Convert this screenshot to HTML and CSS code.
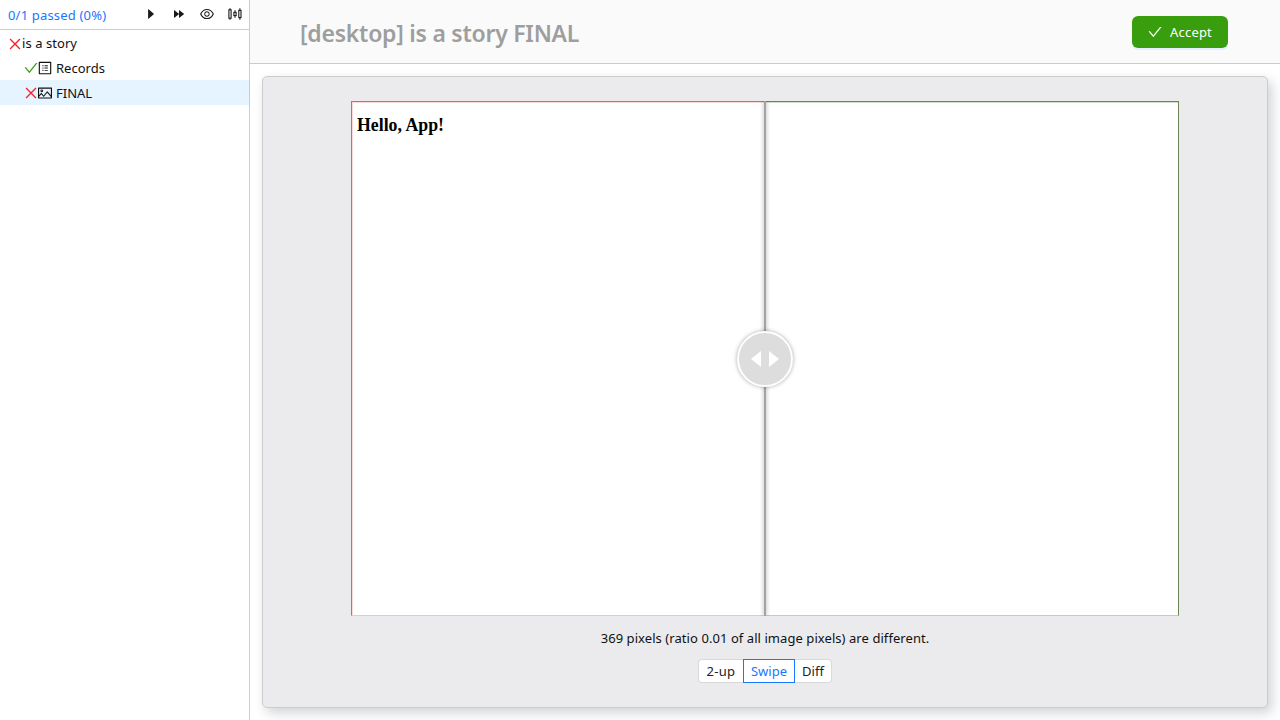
FILE: index.html
```html
<!DOCTYPE html>
<html lang="en">
<head>
<meta charset="utf-8">
<title>Results</title>
<link rel="stylesheet" href="styles.css">
</head>
<body>
<svg class="defs" width="0" height="0">
  <symbol id="check" viewBox="64 64 896 896"><path d="M912 190h-69.9c-9.8 0-19.1 4.5-25.1 12.2L404.7 724.5 207 474a32 32 0 00-25.1-12.2H112c-6.7 0-10.4 7.7-6.3 12.9l273.9 347c12.8 16.2 37.4 16.2 50.3 0l488.4-618.9c4.1-5.1.4-12.8-6.3-12.8z"/></symbol>
  <symbol id="close" viewBox="64 64 896 896"><path d="M195 195L829 829M829 195L195 829" fill="none" stroke="currentColor" stroke-width="86"/></symbol>
</svg>
<div class="app">
  <aside class="sidebar">
    <div class="toolbar">
      <span class="passed">0/1 passed (0%)</span>
      <div class="tools">
        <svg class="icon" viewBox="0 0 1024 1024"><path d="M715.8 493.5L335 165.1c-14.2-12.2-35-1.2-35 18.5v656.8c0 19.7 20.8 30.7 35 18.5l380.8-328.4c10.9-9.4 10.9-27.6 0-37z"/></svg>
        <svg class="icon" viewBox="32 64 896 896"><path d="M793.8 499.3L506.4 273.5c-10.7-8.4-26.4-.8-26.4 12.7v451.6c0 13.5 15.7 21.1 26.4 12.7l287.4-225.8a16.14 16.14 0 000-25.4zm-320 0L186.4 273.5c-10.7-8.4-26.4-.8-26.4 12.7v451.5c0 13.5 15.7 21.1 26.4 12.7l287.4-225.8c4.1-3.2 6.2-8 6.2-12.7 0-4.6-2.1-9.4-6.2-12.6z"/></svg>
        <svg class="icon" viewBox="64 64 896 896"><path d="M942.2 486.2C847.4 286.5 704.1 186 512 186c-192.2 0-335.4 100.5-430.2 300.3a60.3 60.3 0 000 51.5C176.6 737.5 319.9 838 512 838c192.2 0 335.4-100.5 430.2-300.3 7.7-16.2 7.7-35 0-51.5zM512 766c-161.3 0-279.4-81.8-362.7-254C232.6 339.8 350.7 258 512 258c161.3 0 279.4 81.8 362.7 254C791.5 684.2 673.4 766 512 766zm-4-430c-97.2 0-176 78.8-176 176s78.8 176 176 176 176-78.8 176-176-78.8-176-176-176zm0 288c-61.9 0-112-50.1-112-112s50.1-112 112-112 112 50.1 112 112-50.1 112-112 112z"/></svg>
        <svg class="icon" viewBox="0 0 14 14"><g fill="none" stroke="currentColor" stroke-width="1.1"><path d="M2 1.2V3M2 11v1.8M11.9 1.2V3.4M11.9 10.6v2.2M7 3.2V5.4M7 8.6v2.2"/><rect x=".9" y="2.8" width="2.2" height="8.4"/><rect x="10.8" y="3.4" width="2.2" height="7.2"/><rect x="5.9" y="5.4" width="2.2" height="3.2"/></g></svg>
      </div>
    </div>
    <div class="row root"><svg class="icon bad"><use href="#close"/></svg><span>is a story</span></div>
    <div class="row child"><svg class="icon good"><use href="#check"/></svg><svg class="icon" viewBox="64 64 896 896"><path fill-rule="evenodd" d="M880 112H144c-17.7 0-32 14.3-32 32v736c0 17.7 14.3 32 32 32h736c17.7 0 32-14.3 32-32V144c0-17.7-14.3-32-32-32zm-40 728H184V184h656v656z"/><path d="M484 336h208v56H484zM484 484h208v56H484zM484 632h208v56H484z"/><circle cx="380" cy="364" r="40"/><circle cx="380" cy="512" r="40"/><circle cx="380" cy="660" r="40"/></svg><span class="label">Records</span></div>
    <div class="row child selected"><svg class="icon bad"><use href="#close"/></svg><svg class="icon" viewBox="64 64 896 896"><path d="M928 160H96c-17.7 0-32 14.3-32 32v640c0 17.7 14.3 32 32 32h832c17.7 0 32-14.3 32-32V192c0-17.7-14.3-32-32-32zm-40 632H136v-39.9l138.5-164.3 150.1 178L658.1 489 888 761.6V792zm0-129.8L664.2 396.8c-3.2-3.8-9-3.8-12.2 0L424.6 666.4l-144-170.7c-3.2-3.8-9-3.8-12.2 0L136 652.7V232h752v430.2zM304 456a88 88 0 100-176 88 88 0 000 176zm0-116c15.5 0 28 12.5 28 28s-12.5 28-28 28-28-12.5-28-28 12.5-28 28-28z"/></svg><span class="label">FINAL</span></div>
  </aside>
  <div class="content">
    <header class="header">
      <h1 class="title">[desktop] is a story FINAL</h1>
      <button class="accept"><svg class="icon"><use href="#check"/></svg><span>Accept</span></button>
    </header>
    <main class="card">
      <div class="compare">
        <div class="pane before"><h2 class="hello">Hello, App!</h2></div>
        <div class="pane after"></div>
        <div class="divider"></div>
        <div class="handle"><svg width="28" height="18" viewBox="0 0 28 18"><path d="M10 1v16L0 9zM18 1v16l10-8z" fill="#fff"/></svg></div>
      </div>
      <p class="message">369 pixels (ratio 0.01 of all image pixels) are different.</p>
      <div class="modes"><button class="mode first">2-up</button><button class="mode active">Swipe</button><button class="mode last">Diff</button></div>
    </main>
  </div>
</div>
</body>
</html>
```
FILE: styles.css
```css
* { box-sizing: border-box; }
body { margin: 0; background: #fff; color: #1a1a1a; font: 13px/25px "Segoe UI", "Noto Sans", sans-serif; }
button { font: inherit; padding: 0; }
.defs { position: absolute; }
.app { display: flex; width: 1280px; height: 720px; overflow: hidden; }
.sidebar { width: 250px; border-right: 1px solid #ccc; }
.toolbar { display: flex; justify-content: space-between; height: 30px; padding: 0 7px 0 8px; border-bottom: 1px solid #ccc; }
.passed { color: #1677ff; line-height: 30px; letter-spacing: .18px; white-space: nowrap; }
.tools { display: flex; gap: 14px; padding-top: 7px; }
.icon { display: block; width: 14px; height: 14px; flex: none; fill: currentColor; }
.row { display: flex; align-items: center; height: 25px; white-space: nowrap; color: #111; }
.root { padding: 2px 0 0 8px; letter-spacing: .06px; }
.child { padding: 1px 0 0 24px; }
.label { margin-left: 4px; }
.selected { background: #e6f4ff; }
.bad { color: #f5222d; }
.good { color: #389e0d; }
.content { flex: 1; display: flex; flex-direction: column; }
.header { display: flex; justify-content: space-between; align-items: flex-start; height: 64px; padding: 16px 52px 0 50px; background: #fafafa; border-bottom: 1px solid #ccc; }
.title { margin: 0; font-size: 23px; line-height: 34px; font-weight: 600; letter-spacing: -.25px; color: #9e9e9e; white-space: nowrap; }
.accept { display: flex; align-items: center; gap: 8px; width: 96px; height: 32px; padding-left: 16px; border: 0; border-radius: 6px; background: #389e0d; color: #fff; box-shadow: 0 2px 0 #e6f0ff; line-height: 32px; letter-spacing: .2px; }
.card { display: flex; flex-direction: column; align-items: center; width: 1006px; height: 632px; margin: 12px; padding-top: 24px; border: 1px solid #ccc; border-radius: 5px; background: #ebebed; box-shadow: 4px 5px 12px rgba(40, 55, 70, .22); }
.compare { position: relative; display: flex; width: 828px; height: 515px; }
.pane { flex: 1; background: #fff; }
.before { border: 1px solid #ea5f58; border-right: 0; border-bottom-color: #f0c4bf; box-shadow: inset 1px 1px 0 #fad9d6; }
.after { border: 1px solid #6c8558; border-left: 0; border-bottom-color: #bcd1ba; box-shadow: inset 0 1px 0 #cfdfcc; }
.hello { margin: 11px 0 0 5px; font: bold 17.8px/24px "Liberation Serif", serif; color: #000; }
.divider { position: absolute; left: 413px; top: 0; width: 2px; height: 515px; background: #a3a3a3; box-shadow: 0 0 4px rgba(0, 0, 0, .4); clip-path: inset(0 -6px); }
.handle { position: absolute; left: 386px; top: 230px; display: flex; align-items: center; justify-content: center; width: 56px; height: 56px; border: 2px solid #fff; border-radius: 50%; background: #ddd; box-shadow: 0 0 4px rgba(0, 0, 0, .35); }
.message { margin: 10px 0 8px; line-height: 25px; letter-spacing: .065px; white-space: nowrap; color: #111; }
.modes { display: flex; }
.mode { height: 24px; border: 1px solid #d9d9d9; background: #fff; color: #222; line-height: 22px; }
.first { width: 45px; border-right: 0; border-radius: 4px 0 0 4px; letter-spacing: .3px; }
.active { width: 52px; border-color: #1677ff; color: #1677ff; }
.last { width: 37px; border-left: 0; border-radius: 0 4px 4px 0; }
```
